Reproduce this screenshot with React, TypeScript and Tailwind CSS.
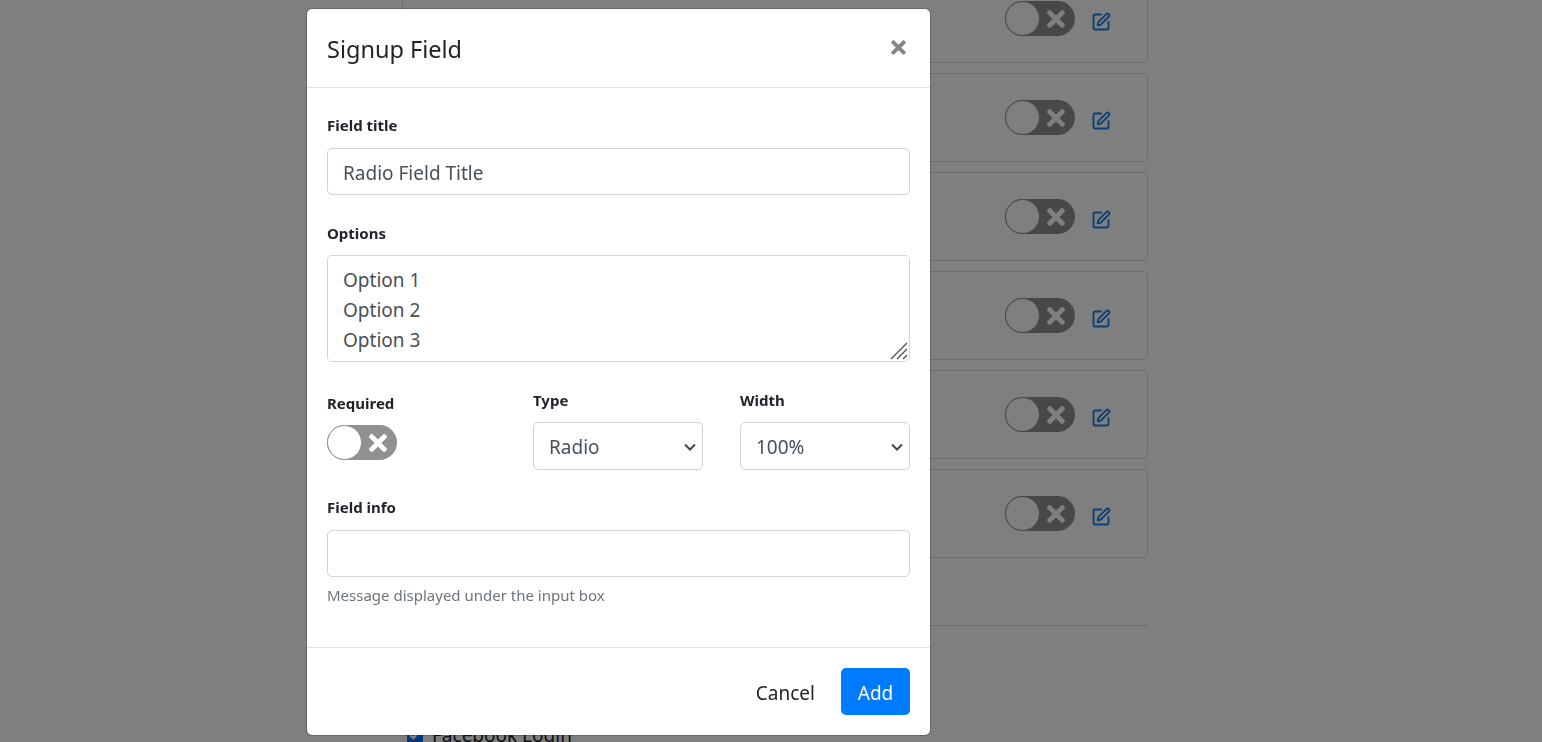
import { SquarePen } from "lucide-react";
import { FaTimes } from "react-icons/fa";

const fieldClass =
  "block w-full rounded-[5px] border border-[#ced4da] bg-white px-[15px] text-[19px] leading-[30px] text-[#495057] outline-none";
const labelClass = "block text-[15px] leading-[21px] font-bold text-[#212529]";

const Toggle = () => {
  return (
    <div className="flex h-[35px] w-[70px] items-center rounded-full bg-[#919191]">
      <div className="h-[35px] w-[35px] rounded-full border border-[#919191] bg-white" />
      <FaTimes className="ml-[3px] text-[26px] text-white" />
    </div>
  );
};

const BackgroundCard = () => {
  return (
    <div className="flex h-[89px] items-center justify-end rounded-[5px] border border-black/15 pr-[36px]">
      <Toggle />
      <SquarePen className="mt-[6px] ml-[16px] h-[20px] w-[20px] text-[#0f7ee8]" strokeWidth={2.2} />
    </div>
  );
};

const SelectField = ({ value }: { value: string }) => {
  return (
    <div className="relative mt-[11px]">
      <select className={`${fieldClass} h-[48px] appearance-none pt-[2px]`} defaultValue={value}>
        <option>{value}</option>
      </select>
      <svg viewBox="0 0 12 8" className="absolute top-[21px] right-[7px] h-[8px] w-[12px] text-[#444]">
        <path d="M1 1.5l5 5 5-5" fill="none" stroke="currentColor" strokeWidth="2" />
      </svg>
    </div>
  );
};

const App = () => {
  return (
    <div className="relative h-screen overflow-hidden bg-white font-['Noto_Sans','Open_Sans',sans-serif]">
      <div className="ml-[402px] -mt-[26px] flex w-[746px] flex-col gap-[10px]">
        <BackgroundCard />
        <BackgroundCard />
        <BackgroundCard />
        <BackgroundCard />
        <BackgroundCard />
        <BackgroundCard />
        <div className="mt-[57px] border-t border-black/15" />
        <label className="mt-[85px] flex items-center gap-[9px] pl-[5px] text-[19px] text-[#212529]">
          <input type="checkbox" defaultChecked className="h-[16px] w-[16px] accent-[#0d6efd]" />
          Facebook Login
        </label>
      </div>

      <div className="fixed inset-0 bg-black/50 pt-[8px] pl-[306px]">
        <div className="flex h-[728px] w-[625px] flex-col rounded-[6px] border border-black/20 bg-white bg-clip-padding">
          <header className="flex h-[79px] shrink-0 items-center justify-between border-b border-[#dee2e6] pr-[21px] pl-[20px]">
            <h1 className="pt-[2px] text-[23.5px] leading-[36px] text-[#212529]">Signup Field</h1>
            <FaTimes className="-mt-[2px] text-[21px] text-[#858585]" />
          </header>

          <div className="flex-1 px-[20px] pt-[27px]">
            <label className={labelClass}>Field title</label>
            <input
              readOnly
              value="Radio Field Title"
              className={`${fieldClass} mt-[12px] h-[47px] pt-[2px]`}
            />

            <label className={`${labelClass} mt-[28px]`}>Options</label>
            <div className="relative mt-[11px]">
              <textarea
                readOnly
                value={"Option 1\nOption 2\nOption 3"}
                className={`${fieldClass} h-[107px] resize-none py-[9px]`}
              />
              <svg viewBox="0 0 18 18" className="absolute right-[2px] bottom-[2px] h-[18px] w-[18px] text-[#555]">
                <path d="M1 17L17 1M7 17L17 7M13 17l4-4" fill="none" stroke="currentColor" strokeWidth="1.4" />
              </svg>
            </div>

            <div className="mt-[28px] grid grid-cols-[169px_170px_170px] gap-x-[37px]">
              <div className="pt-[3px]">
                <label className={labelClass}>Required</label>
                <div className="mt-[11px]">
                  <Toggle />
                </div>
              </div>
              <div>
                <label className={labelClass}>Type</label>
                <SelectField value="Radio" />
              </div>
              <div>
                <label className={labelClass}>Width</label>
                <SelectField value="100%" />
              </div>
            </div>

            <label className={`${labelClass} mt-[27px]`}>Field info</label>
            <input readOnly className={`${fieldClass} mt-[12px] h-[47px]`} />
            <p className="mt-[8px] text-[15px] leading-[21px] text-[#6c757d]">
              Message displayed under the input box
            </p>
          </div>

          <footer className="flex h-[88px] shrink-0 items-center justify-end gap-[10px] border-t border-[#dee2e6] pr-[20px]">
            <button className="h-[47px] px-[16px] pt-[3px] text-[19px] text-[#212529]">Cancel</button>
            <button className="h-[47px] w-[69px] rounded-[5px] bg-[#007bff] pt-[3px] text-[19px] text-white">
              Add
            </button>
          </footer>
        </div>
      </div>
    </div>
  );
};

export default App;
